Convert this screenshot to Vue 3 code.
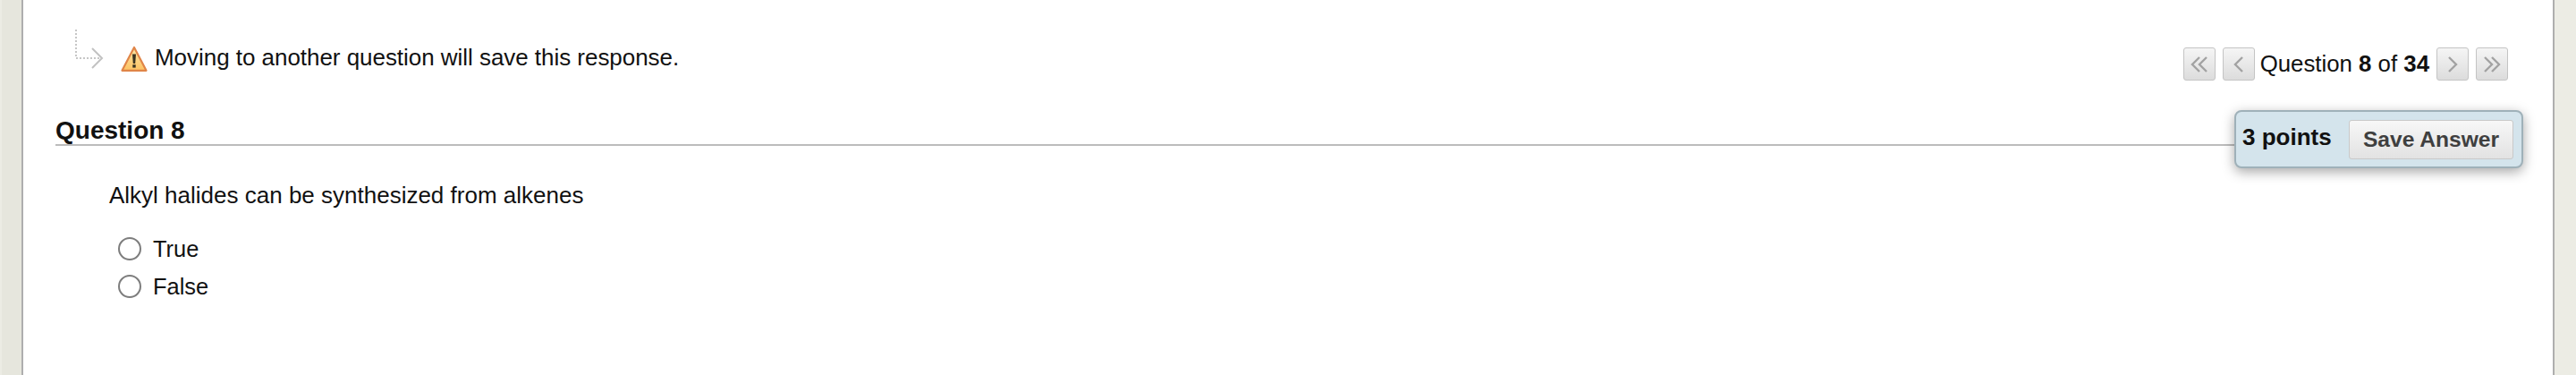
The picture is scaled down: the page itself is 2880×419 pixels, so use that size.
<script setup>
const options = ["True", "False"];
</script>

<template>
  <div class="page">
    <main class="panel">
      <div class="top-row">
        <div class="notice">
          <svg class="elbow" width="32" height="44" viewBox="0 0 32 44">
            <path d="M1 0V32H29" fill="none" stroke="#c6c6c6" stroke-width="2" stroke-dasharray="2 2" />
            <path d="M19 21L30 32L19 43" fill="none" stroke="#c2c2c2" stroke-width="2" />
          </svg>
          <svg class="warn" width="30" height="30" viewBox="0 0 30 30">
            <defs>
              <linearGradient id="warnFill" x1="0" y1="0" x2="0" y2="1">
                <stop offset="0" stop-color="#fde7a8" />
                <stop offset="1" stop-color="#fdc262" />
              </linearGradient>
            </defs>
            <path d="M15 2L28.5 27.8H1.5Z" fill="url(#warnFill)" stroke="#e08548" stroke-width="2.2" stroke-linejoin="round" />
            <path d="M13 9.5H17L16.2 20H13.8Z" fill="#3a3320" />
            <rect x="13.3" y="21.2" width="3.4" height="3.4" fill="#3a3320" />
          </svg>
          <span>Moving to another question will save this response.</span>
        </div>
        <nav class="pager">
          <button class="page-btn" type="button">
            <svg width="22" height="20" viewBox="0 0 22 20"><path d="M11 2L3 10L11 18M19 2L11 10L19 18" /></svg>
          </button>
          <button class="page-btn" type="button">
            <svg width="22" height="20" viewBox="0 0 22 20"><path d="M15 2L7 10L15 18" /></svg>
          </button>
          <span class="page-label">Question <b>8</b> of <b>34</b></span>
          <button class="page-btn" type="button">
            <svg width="22" height="20" viewBox="0 0 22 20"><path d="M7 2L15 10L7 18" /></svg>
          </button>
          <button class="page-btn" type="button">
            <svg width="22" height="20" viewBox="0 0 22 20"><path d="M3 2L11 10L3 18M11 2L19 10L11 18" /></svg>
          </button>
        </nav>
      </div>

      <section class="question">
        <div class="question-head">
          <h2>Question 8</h2>
          <div class="points-box">
            <span class="points">3 points</span>
            <button class="save" type="button">Save Answer</button>
          </div>
        </div>
        <p class="prompt">Alkyl halides can be synthesized from alkenes</p>
        <ul class="choices">
          <li v-for="option in options" :key="option">
            <span class="radio"></span>
            <span>{{ option }}</span>
          </li>
        </ul>
      </section>
    </main>
  </div>
</template>

<style>
body {
  margin: 0;
  background: #ecece4;
}
</style>

<style scoped>
.page {
  display: flex;
  height: 419px;
  padding: 0 24px;
  overflow: hidden;
  font-family: "Liberation Sans", Arial, sans-serif;
  color: #111;
  background-color: #ecece4;
  background-image:
    linear-gradient(#e6e6dd, #e6e6dd),
    linear-gradient(#e6e6dd, #e6e6dd);
  background-size: 22px 6px, 6px 24px;
  background-repeat: repeat-y;
  background-position: 2px 16px, 10px 7px;
}

.panel {
  flex: 1;
  border-left: 2px solid #aeaeae;
  border-right: 2px solid #aeaeae;
  background: #fff;
  padding: 53px 50px 0 36px;
}

.top-row {
  display: flex;
  justify-content: space-between;
  align-items: flex-start;
}

.notice {
  display: flex;
  align-items: flex-start;
  margin: -20px 0 0 22px;
  font-size: 26px;
  line-height: 30px;
}

.elbow {
  flex: none;
  margin-right: 19px;
}

.warn {
  flex: none;
  margin: 18px 8px 0 0;
}

.notice span {
  margin-top: 16px;
  letter-spacing: -0.04px;
}

.pager {
  display: flex;
  align-items: center;
  gap: 8px;
}

.page-btn {
  display: flex;
  align-items: center;
  justify-content: center;
  width: 36px;
  height: 37px;
  padding: 0;
  border: 1px solid #c4c4c4;
  border-radius: 3px;
  background: linear-gradient(#f5f5f5, #dcdcdc);
}

.page-btn svg path {
  fill: none;
  stroke: #a2a2a2;
  stroke-width: 2.4;
}

.page-label {
  margin: 0 0 1px -2px;
  font-size: 25.8px;
  white-space: nowrap;
}

.page-label b {
  font-weight: 700;
}

.question {
  margin-top: 33px;
}

.question-head {
  position: relative;
  height: 38px;
  margin-right: 300px;
  border-bottom: 2px solid #bcbcbc;
}

.question-head h2 {
  margin: 0;
  padding-top: 5px;
  font-size: 28px;
  line-height: 36px;
  font-weight: 700;
}

.points-box {
  position: absolute;
  top: 0;
  left: 2436px;
  display: flex;
  align-items: center;
  justify-content: space-between;
  box-sizing: border-box;
  width: 323px;
  height: 65px;
  padding: 0 9px 0 7px;
  border: 2px solid #9fb1b9;
  border-radius: 8px;
  background: #d4e4ec;
  box-shadow: 0 4px 14px rgba(0, 0, 0, 0.35);
}

.points {
  font-size: 26px;
  font-weight: 700;
  margin-bottom: 5px;
}

.save {
  box-sizing: border-box;
  width: 184px;
  height: 44px;
  padding: 0;
  border: 1px solid #c9c9c9;
  border-radius: 3px;
  background: linear-gradient(#f7f7f7, #e2e2e2);
  color: #3f3f3f;
  font: 700 24.6px "Liberation Sans", Arial, sans-serif;
}

.prompt {
  margin: 40px 0 0 60px;
  font-size: 26px;
  line-height: 30px;
}

.choices {
  margin: 24px 0 0 70px;
  padding: 0;
  list-style: none;
  font-size: 25.4px;
}

.choices li {
  display: flex;
  align-items: center;
  height: 42px;
}

.radio {
  box-sizing: border-box;
  width: 26px;
  height: 26px;
  margin-right: 13px;
  border: 2px solid #7d7d7d;
  border-radius: 50%;
  background: #fff;
}
</style>
